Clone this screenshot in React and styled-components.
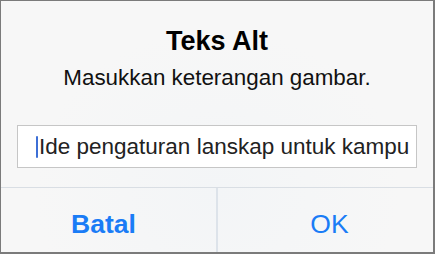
import React from 'react';
import styled, { createGlobalStyle } from 'styled-components';

const GlobalStyle = createGlobalStyle`
  html, body {
    margin: 0;
    padding: 0;
    background: #ffffff;
  }
  * {
    box-sizing: border-box;
  }
`;

const Dialog = styled.div`
  width: 435px;
  height: 254px;
  display: flex;
  flex-direction: column;
  border: 1px solid #7b7b7b;
  border-right-width: 2px;
  border-bottom-width: 2px;
  background: radial-gradient(ellipse at 50% 75%, #f3f5f7 0%, #f7f7f7 60%);
  font-family: "Liberation Sans", Arial, sans-serif;
  overflow: hidden;
`;

const Body = styled.div`
  display: flex;
  flex-direction: column;
  align-items: center;
  padding: 25px 16px 0 16px;
`;

const Title = styled.h1`
  margin: 0;
  font-size: 27px;
  line-height: 30px;
  font-weight: 700;
  color: #000;
`;

const Message = styled.p`
  margin: 9px 0 0 0;
  font-size: 22.4px;
  line-height: 26px;
  color: #111;
`;

const Field = styled.div`
  align-self: stretch;
  margin-top: 34px;
  height: 43px;
  display: flex;
  align-items: center;
  padding: 0 4px 0 18px;
  background: #fff;
  border: 1px solid #c6c6c6;
  overflow: hidden;
`;

const Caret = styled.span`
  width: 2px;
  height: 22px;
  margin-right: 1px;
  border-radius: 1px;
  background: #3d6fd6;
  flex: none;
`;

const FieldText = styled.span`
  font-size: 22.5px;
  color: #222;
  white-space: nowrap;
`;

const Actions = styled.div`
  margin-top: 19px;
  flex: 1;
  display: grid;
  grid-template-columns: 215px 1fr;
  border-top: 1px solid #d9dee4;
`;

const Action = styled.div`
  display: flex;
  align-items: center;
  justify-content: center;
  padding-top: 8px;
  padding-left: ${p => (p.$divider ? '8px' : '0')};
  padding-right: ${p => (p.$divider ? '0' : '10px')};
  font-size: 26.5px;
  font-weight: ${p => (p.$bold ? 700 : 400)};
  color: #1a7cf6;
  border-left: ${p => (p.$divider ? '2px solid #dde3ea' : 'none')};
`;

export default function App() {
  return (
    <>
      <GlobalStyle />
      <Dialog>
        <Body>
          <Title>Teks Alt</Title>
          <Message>Masukkan keterangan gambar.</Message>
          <Field>
            <Caret />
            <FieldText>Ide pengaturan lanskap untuk kampu</FieldText>
          </Field>
        </Body>
        <Actions>
          <Action $bold>Batal</Action>
          <Action $divider>OK</Action>
        </Actions>
      </Dialog>
    </>
  );
}
